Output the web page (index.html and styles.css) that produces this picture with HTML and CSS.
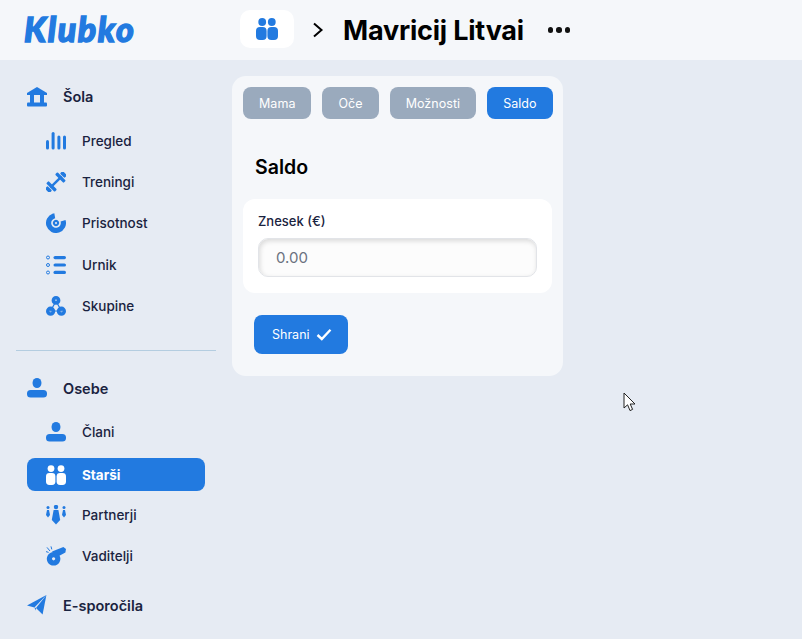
FILE: index.html
```html
<!DOCTYPE html>
<html lang="en">
<head>
    <meta charset="UTF-8">
    <meta name="viewport" content="width=device-width, initial-scale=1.0">
    <title>Klubko</title>
    <link rel="stylesheet" href="styles.css">
</head>
<body>

<!-- Top bar -->
<div class="topbar">
    <div class="logo">Klubko</div>
    <div class="crumb-icon">
        <svg width="24" height="24" viewBox="0 0 24 24"><circle cx="7.2" cy="5" r="3.9"/><circle cx="16.8" cy="5" r="3.9"/><rect x="1" y="10" width="10.6" height="13" rx="4"/><rect x="12.4" y="10" width="10.6" height="13" rx="4"/></svg>
    </div>
    <svg class="chevron" width="12" height="16" viewBox="0 0 12 16"><path d="M2 1.5 L9.5 8 L2 14.5" fill="none" stroke="#000" stroke-width="2"/></svg>
    <h1>Mavricij Litvai</h1>
    <div class="dots"><span></span><span></span><span></span></div>
</div>

<div class="layout">
    <!-- Sidebar -->
    <div class="sidebar">
        <div class="head">
            <svg class="ico" viewBox="0 0 20 20"><path d="M10 0 L20 6 V8 H0 V6 Z"/><rect x="3" y="8" width="4" height="8"/><rect x="13" y="8" width="4" height="8"/><rect x="0" y="15.6" width="20" height="4" rx="1"/></svg>
            <span>Šola</span>
        </div>
        <div class="row">
            <svg class="ico" viewBox="0 0 20 20"><rect x="0" y="9" width="3" height="9.6" rx="1.5"/><rect x="5.6" y="1" width="3" height="17.6" rx="1.5"/><rect x="11.4" y="4.6" width="3" height="14" rx="1.5"/><rect x="17" y="4.6" width="3" height="14" rx="1.5"/></svg>
            <span>Pregled</span>
        </div>
        <div class="row">
            <svg class="ico" viewBox="0 0 20 20"><g transform="rotate(-45 10 10)"><rect x="2" y="8.8" width="16" height="2.4"/><rect x="2" y="4" width="3.4" height="12" rx="1"/><rect x="14.6" y="4" width="3.4" height="12" rx="1"/><rect x="-2.6" y="6.8" width="3.8" height="6.4" rx="1"/><rect x="18.8" y="6.8" width="3.8" height="6.4" rx="1"/></g></svg>
            <span>Treningi</span>
        </div>
        <div class="row">
            <svg class="ico" viewBox="0 0 20 20"><circle cx="10" cy="10" r="7.4" fill="none" stroke="#227ae0" stroke-width="5.2" stroke-dasharray="36 10.5" transform="rotate(-18 10 10)" pathLength="46.5"/><path fill-rule="evenodd" d="M10 6.8 a3.2 3.2 0 1 1 -.01 0 Z M10 9 a1 1 0 1 0 .01 0 Z"/></svg>
            <span>Prisotnost</span>
        </div>
        <div class="row">
            <svg class="ico" viewBox="0 0 20 20"><g fill="none" stroke="#227ae0" stroke-width="1"><circle cx="2" cy="2.5" r="1.5"/><circle cx="2" cy="10" r="1.5"/><circle cx="2" cy="17.5" r="1.5"/></g><rect x="7.5" y="1" width="12.5" height="3.2" rx="1.6"/><rect x="7.5" y="8.4" width="12.5" height="3.2" rx="1.6"/><rect x="7.5" y="15.8" width="12.5" height="3.2" rx="1.6"/></svg>
            <span>Urnik</span>
        </div>
        <div class="row">
            <svg class="ico" viewBox="0 0 20 20"><path d="M10 5 L4.6 15 H15.4 Z" fill="none" stroke="#227ae0" stroke-width="1.2"/><path fill-rule="evenodd" d="M10 0 a4.4 4.4 0 1 1 0 8.8 a4.4 4.4 0 1 1 0 -8.8 Z M10 3.4 a1 1 0 1 0 0 2 a1 1 0 1 0 0 -2 Z M4.6 10.6 a4.6 4.6 0 1 1 0 9.2 a4.6 4.6 0 1 1 0 -9.2 Z M4.6 14.2 a1 1 0 1 0 0 2 a1 1 0 1 0 0 -2 Z M15.4 10.6 a4.6 4.6 0 1 1 0 9.2 a4.6 4.6 0 1 1 0 -9.2 Z M15.4 14.2 a1 1 0 1 0 0 2 a1 1 0 1 0 0 -2 Z"/></svg>
            <span>Skupine</span>
        </div>

        <div class="divider"></div>

        <div class="head head-people">
            <svg class="ico" viewBox="0 0 20 20"><rect x="5.6" y="0" width="8.8" height="10" rx="4.4"/><rect x="0" y="12" width="20" height="7.6" rx="3.6"/></svg>
            <span>Osebe</span>
        </div>
        <div class="row">
            <svg class="ico" viewBox="0 0 20 20"><rect x="5.6" y="0" width="8.8" height="10" rx="4.4"/><rect x="0" y="12" width="20" height="7.6" rx="3.6"/></svg>
            <span>Člani</span>
        </div>
        <div class="row active">
            <svg class="ico" viewBox="0 0 20 20"><circle cx="5" cy="3.6" r="3.4"/><circle cx="15" cy="3.6" r="3.4"/><rect x="0" y="8" width="9.4" height="12" rx="3.4"/><rect x="10.6" y="8" width="9.4" height="12" rx="3.4"/></svg>
            <span>Starši</span>
        </div>
        <div class="row">
            <svg class="ico" viewBox="0 0 20 20"><circle cx="10" cy="2" r="2.2"/><path d="M7.6 5 H12.4 L14.2 15 L10 19.4 L5.8 15 Z"/><circle cx="2" cy="2.6" r="1.5"/><path d="M1 5 H3 L4 10 L2 12.6 L0 10 Z"/><circle cx="18" cy="2.6" r="1.5"/><path d="M17 5 H19 L20 10 L18 12.6 L16 10 Z"/></svg>
            <span>Partnerji</span>
        </div>
        <div class="row">
            <svg class="ico" viewBox="0 0 20 20"><path d="M17.4 1 L20 3 L19.4 6.6 L11 11 L6 5.6 Z"/><path fill-rule="evenodd" d="M7.6 6 a6.8 6.8 0 1 1 -.01 0 Z M7.6 11.2 a1.6 1.6 0 1 0 .01 0 Z"/><path d="M1 1.4 L4 5 M0 5.6 L2.6 6.4 M5 .4 L5.8 3.4" stroke="#227ae0" stroke-width="1"/></svg>
            <span>Vaditelji</span>
        </div>

        <div class="head head-last">
            <svg class="ico" viewBox="0 0 20 20"><path d="M19.4 0 L0 10.6 L7.4 12.4 Z"/><path d="M19.4 0 L9 13 L15.6 19.6 Z"/><path d="M7.4 12.4 L9 13 L8.6 15.6 Z"/></svg>
            <span>E-sporočila</span>
        </div>
    </div>

    <!-- Main panel -->
    <div class="panel">
        <div class="tabs">
            <button class="tab">Mama</button>
            <button class="tab">Oče</button>
            <button class="tab">Možnosti</button>
            <button class="tab tab-on">Saldo</button>
        </div>
        <h2>Saldo</h2>
        <div class="field-card">
            <label for="amount">Znesek (€)</label>
            <input type="text" id="amount" placeholder="0.00">
        </div>
        <button class="save">
            Shrani
            <svg width="16" height="13" viewBox="0 0 16 13"><path d="M1.5 7 L5.8 11 L14.5 1.8" fill="none" stroke="#fff" stroke-width="2.4"/></svg>
        </button>
    </div>
</div>

<!-- Mouse pointer caught in the screenshot -->
<svg class="pointer" width="14" height="21" viewBox="0 0 14 21"><path d="M1 1 V16 L4.6 12.8 L7 18.6 L9.6 17.4 L7.2 12 H12 Z" fill="#fff" stroke="#222" stroke-width="1"/></svg>

</body>
</html>
```
FILE: styles.css
```css
* {
    box-sizing: border-box;
}
body {
    margin: 0;
    height: 639px;
    overflow: hidden;
    position: relative;
    font-family: "Inter", "Noto Sans", sans-serif;
    background-color: #e6ebf3;
    color: #1a2340;
}

/* top bar */
.topbar {
    display: flex;
    align-items: center;
    height: 60px;
    background-color: #f5f7fa;
}
.logo {
    width: 240px;
    height: 60px;
    line-height: 57px;
    padding-left: 24px;
    font-family: "Lato", sans-serif;
    font-size: 34px;
    font-weight: 900;
    font-style: italic;
    letter-spacing: 1.6px;
    color: #227ae0;
    -webkit-text-stroke: 1.4px #227ae0;
}
.crumb-icon {
    display: flex;
    align-items: center;
    justify-content: center;
    width: 54px;
    height: 38px;
    margin-bottom: 2px;
    background-color: #fff;
    border-radius: 10px;
}
.crumb-icon svg {
    fill: #227ae0;
}
.chevron {
    margin-left: 18px;
}
.topbar h1 {
    margin: 0 0 0 19px;
    font-size: 27px;
    font-weight: 700;
    letter-spacing: -0.2px;
    color: #000;
}
.dots {
    display: flex;
    gap: 3px;
    margin-left: 24px;
}
.dots span {
    width: 5.5px;
    height: 5.5px;
    border-radius: 50%;
    background-color: #111;
}

/* sidebar */
.layout {
    display: flex;
    align-items: flex-start;
}
.sidebar {
    width: 232px;
    padding: 20px 16px 0;
}
.ico {
    width: 20px;
    height: 20px;
    flex-shrink: 0;
    fill: #227ae0;
}
.head, .row {
    display: flex;
    align-items: center;
    height: 33px;
    width: 178px;
    margin-left: 11px;
}
.head {
    gap: 16px;
    font-size: 14.5px;
    font-weight: 600;
    margin-bottom: 11px;
}
.head-people {
    margin-top: 20.3px;
}
.head-last {
    margin-top: 15.6px;
    margin-bottom: 0;
}
.row {
    gap: 16px;
    padding-left: 19px;
    font-size: 13.5px;
    font-weight: 500;
    border-radius: 8px;
    margin-bottom: 8.4px;
}
.row.active {
    margin-top: 9.5px;
    margin-bottom: 7.5px;
    background-color: #227ae0;
    color: #fff;
    font-weight: 700;
}
.row.active .ico {
    fill: #fff;
}
.divider {
    height: 1px;
    width: 200px;
    margin-top: 27.7px;
    background-color: #b4cde0;
}

/* main panel */
.panel {
    width: 331px;
    height: 300px;
    margin-top: 16px;
    padding: 11px;
    background-color: #f5f7fa;
    border-radius: 14px;
}
.tabs {
    display: flex;
    gap: 11px;
}
.tab {
    height: 32px;
    padding: 0 16px;
    border: none;
    border-radius: 8px;
    background-color: #9aaabd;
    color: #fff;
    font-family: inherit;
    font-size: 12.5px;
    font-weight: 400;
    letter-spacing: 0.05px;
}
.tab-on {
    background-color: #227ae0;
}
.panel h2 {
    margin: 36px 0 20px 12px;
    height: 24px;
    line-height: 24px;
    font-size: 19.5px;
    font-weight: 600;
    color: #000;
}
.field-card {
    height: 94px;
    padding: 14px 15px;
    background-color: #fff;
    border-radius: 12px;
}
.field-card label {
    display: block;
    height: 17px;
    line-height: 17px;
    margin-bottom: 8px;
    font-size: 13px;
    font-weight: 500;
}
.field-card input {
    display: block;
    width: 100%;
    height: 39px;
    padding: 0 17px;
    border: 1px solid #e2e4e8;
    border-radius: 10px;
    background-color: #fcfcfc;
    box-shadow: inset 1px 2px 5px rgba(0, 0, 0, 0.14);
    font-family: inherit;
    font-size: 15px;
}
.field-card input::placeholder {
    color: #6b7280;
    opacity: 1;
}
.save {
    display: flex;
    align-items: center;
    gap: 6px;
    height: 39px;
    width: 94px;
    margin: 22px 0 0 11px;
    padding: 0 0 0 18px;
    border: none;
    border-radius: 8px;
    background-color: #227ae0;
    color: #fff;
    font-family: inherit;
    font-size: 12.5px;
    font-weight: 400;
}

.pointer {
    position: absolute;
    left: 623px;
    top: 392px;
}
```
